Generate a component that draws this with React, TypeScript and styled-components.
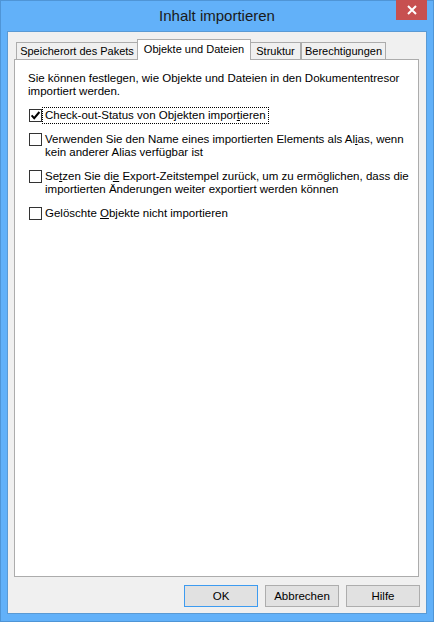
import React from "react";
import styled, { createGlobalStyle } from "styled-components";

const FONT = `"Liberation Sans", Arial, sans-serif`;

const Global = createGlobalStyle`
  html, body { margin: 0; padding: 0; background: #62b1f9; }
  body { font-family: ${FONT}; font-size: 11px; color: #000; }
`;

const Window = styled.div`
  width: 434px;
  height: 622px;
  box-sizing: border-box;
  background: #62b1f9;
  border: 1px solid #4f95d6;
  padding: 0 6px 7px 6px;
  display: flex;
  flex-direction: column;
`;

const TitleBar = styled.div`
  height: 30px;
  flex: none;
  display: grid;
  grid-template-columns: 1fr auto 1fr;
  align-items: start;
`;

const Title = styled.div`
  grid-column: 2;
  font-family: ${FONT};
  font-size: 15px;
  line-height: 30px;
  color: #1a1a1a;
`;

const CloseButton = styled.div`
  grid-column: 3;
  justify-self: end;
  width: 31px;
  height: 20px;
  margin-top: -1px;
  background: #c75050;
  display: flex;
  align-items: center;
  justify-content: center;
`;

const Client = styled.div`
  flex: 1;
  display: flex;
  flex-direction: column;
  background: #f0f0f0;
  border: 1px solid #5a9ad4;
  padding: 7px 6px 6px 6px;
  min-height: 0;
`;

const TabStrip = styled.div`
  height: 20px;
  display: flex;
  align-items: flex-end;
  padding-left: 2px;
  flex: none;
`;

const Tab = styled.div<{ $w: number; $ml: number; $active?: boolean }>`
  box-sizing: border-box;
  width: ${(p) => p.$w}px;
  margin-left: ${(p) => p.$ml}px;
  height: ${(p) => (p.$active ? 21 : 17)}px;
  margin-bottom: ${(p) => (p.$active ? -1 : 0)}px;
  position: relative;
  z-index: ${(p) => (p.$active ? 2 : 1)};
  background: ${(p) => (p.$active ? "#ffffff" : "#f0f0f0")};
  border: 1px solid #acacac;
  border-bottom: none;
  font-size: 11px;
  line-height: ${(p) => (p.$active ? 18 : 16)}px;
  text-align: center;
  white-space: nowrap;
`;

const Panel = styled.div`
  flex: 1;
  margin-right: 1px;
  background: #fff;
  border: 1px solid #acacac;
  padding: 12px 12px 0 13px;
  display: flex;
  flex-direction: column;
`;

const Intro = styled.p`
  margin: 0 0 11px 0;
  font-size: 11.5px;
  line-height: 13px;
  white-space: nowrap;
`;

const OptionList = styled.div`
  display: flex;
  flex-direction: column;
  gap: 11px;
`;

const Option = styled.label`
  display: flex;
  align-items: flex-start;
  padding-left: 1px;
  font-size: 11.5px;
  line-height: 13px;
  white-space: nowrap;
`;

const Box = styled.span`
  width: 13px;
  height: 13px;
  box-sizing: border-box;
  border: 1px solid #333;
  background: #fff;
  flex: none;
  display: flex;
  align-items: center;
  justify-content: center;
`;

const Label = styled.span<{ $focus?: boolean }>`
  margin-left: 2px;
  padding: 0 1px;
  outline: ${(p) => (p.$focus ? "1px dotted #000" : "none")};
  outline-offset: 1px;
`;

const U = styled.span`
  text-decoration: underline;
`;

const ButtonRow = styled.div`
  margin-top: 8px;
  display: flex;
  justify-content: flex-end;
  gap: 7px;
  flex: none;
`;

const Button = styled.div<{ $default?: boolean }>`
  width: 74px;
  height: 22px;
  box-sizing: border-box;
  background: #e1e1e1;
  border: 1px solid ${(p) => (p.$default ? "#3d9bf0" : "#adadad")};
  font-size: 11.5px;
  line-height: 20px;
  text-align: center;
`;

const Check = () => (
  <svg width="11" height="11" viewBox="0 0 11 11">
    <path d="M1.6 5.4 L4.2 8.2 L9.4 2" fill="none" stroke="#000" strokeWidth="2" />
  </svg>
);

const CloseX = () => (
  <svg width="10" height="10" viewBox="0 0 10 10">
    <path d="M1 1 L9 9 M9 1 L1 9" stroke="#fff" strokeWidth="2" />
  </svg>
);

export default function App() {
  return (
    <>
      <Global />
      <Window>
        <TitleBar>
          <Title>Inhalt importieren</Title>
          <CloseButton>
            <CloseX />
          </CloseButton>
        </TitleBar>
        <Client>
          <TabStrip>
            <Tab $w={122} $ml={0}>Speicherort des Pakets</Tab>
            <Tab $w={114} $ml={-1} $active>Objekte und Dateien</Tab>
            <Tab $w={51} $ml={-1}>Struktur</Tab>
            <Tab $w={85} $ml={0}>Berechtigungen</Tab>
          </TabStrip>
          <Panel>
            <Intro>
              Sie können festlegen, wie Objekte und Dateien in den Dokumententresor
              <br />
              importiert werden.
            </Intro>
            <OptionList>
              <Option>
                <Box>
                  <Check />
                </Box>
                <Label $focus>
                  Check-out-Status von Objekten impor<U>t</U>ieren
                </Label>
              </Option>
              <Option>
                <Box />
                <Label>
                  Verwenden Sie den Name eines importierten Elements als Al<U>i</U>as, wenn
                  <br />
                  kein anderer Alias verfügbar ist
                </Label>
              </Option>
              <Option>
                <Box />
                <Label>
                  Se<U>t</U>zen Sie di<U>e</U> Export-Zeitstempel zurück, um zu ermöglichen, dass die
                  <br />
                  importierten Änderungen weiter exportiert werden können
                </Label>
              </Option>
              <Option>
                <Box />
                <Label>
                  Gelöschte <U>O</U>bjekte nicht importieren
                </Label>
              </Option>
            </OptionList>
          </Panel>
          <ButtonRow>
            <Button $default>OK</Button>
            <Button>Abbrechen</Button>
            <Button>Hilfe</Button>
          </ButtonRow>
        </Client>
      </Window>
    </>
  );
}
